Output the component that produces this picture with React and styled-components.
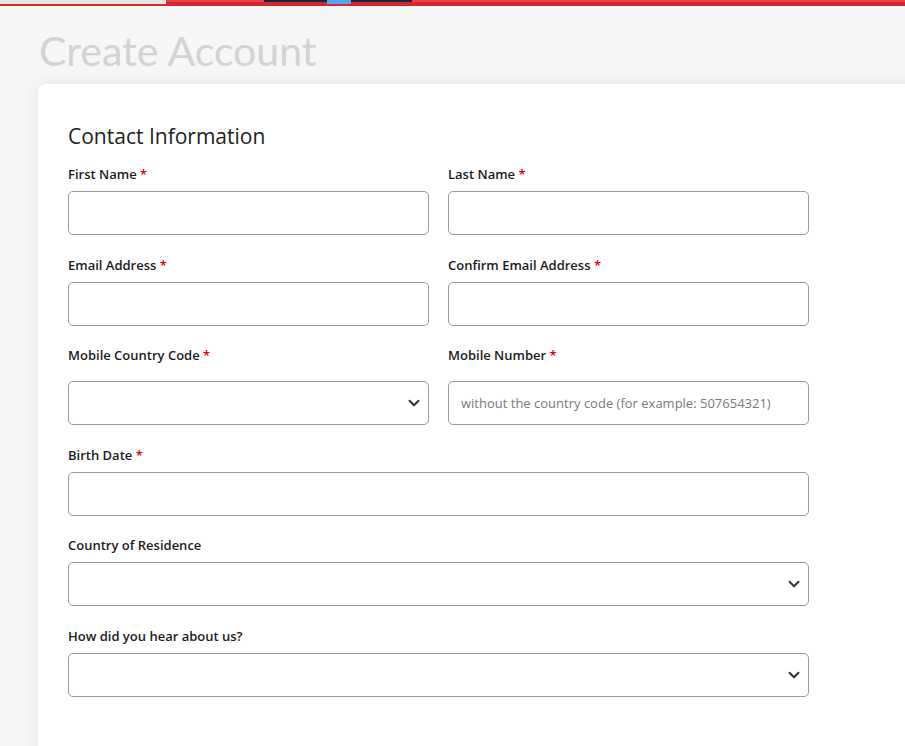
import React from 'react'
import styled, { createGlobalStyle } from 'styled-components'

const GlobalStyle = createGlobalStyle`
  html, body {
    margin: 0;
    padding: 0;
    background: #f6f6f6;
    overflow: hidden;
    font-family: "Open Sans", "Liberation Sans", sans-serif;
  }
`

const TopBar = styled.div`
  display: flex;
  height: 6px;
  width: 100%;
`
const BarGray = styled.div`
  width: 166px;
  height: 6px;
  background: linear-gradient(to bottom, #e5e5e5 0 4px, #d8262f 4px 6px);
`
const BarRed = styled.div`
  flex: 1;
  display: flex;
  height: 6px;
  background: linear-gradient(to bottom, #e8414a 0 2px, #d8262f 2px 6px);
`
const BarNav = styled.div`
  margin-left: 98px;
  width: 148px;
  height: 2px;
  background: #13253f;
  position: relative;
`
const BarActive = styled.div`
  position: absolute;
  left: 63px;
  top: 0;
  width: 24px;
  height: 4px;
  background: #57a6f5;
`

const Page = styled.div`
  padding-left: 38px;
`
const Title = styled.h1`
  margin: 23px 0 0 1px;
  height: 55px;
  font-family: Lato, "Open Sans", sans-serif;
  font-weight: 400;
  font-size: 41px;
  line-height: 44px;
  color: #d3d3d3;
`
const Card = styled.div`
  width: 900px;
  min-height: 700px;
  background: #fff;
  border-radius: 8px;
  box-shadow: 0 0 18px rgba(0, 0, 0, 0.07);
  padding: 38px 30px;
  box-sizing: border-box;
`
const SectionTitle = styled.h2`
  margin: 0 0 15px;
  font-size: 21px;
  font-weight: 400;
  line-height: 28px;
  color: #222;
`
const Grid = styled.div`
  width: 741px;
  display: grid;
  grid-template-columns: 1fr 1fr;
  column-gap: 19px;
  row-gap: 20.5px;
`
const Field = styled.div`
  grid-column: ${(p) => (p.$full ? '1 / 3' : 'auto')};
  display: flex;
  flex-direction: column;
`
const Label = styled.label`
  font-size: 13px;
  font-weight: 600;
  color: #1c1c1c;
  line-height: 18px;
  margin-bottom: ${(p) => (p.$gap ? p.$gap : 8)}px;
`
const Star = styled.span`
  color: #e00000;
`
const Input = styled.input`
  box-sizing: border-box;
  height: 44px;
  width: 100%;
  border: 1px solid #9a9a9a;
  border-radius: 5px;
  padding: 0 12px;
  font-family: "Open Sans", sans-serif;
  font-size: 13px;
  color: #333;
  background: #fff;
  outline: none;
  &::placeholder {
    color: #7a7a7a;
  }
`
const SelectBox = styled.div`
  box-sizing: border-box;
  height: 44px;
  border: 1px solid #9a9a9a;
  border-radius: 5px;
  background: #fff;
  display: flex;
  align-items: center;
  justify-content: flex-end;
  padding-right: 7px;
`

const Chevron = () => (
  <svg width="14" height="14" viewBox="0 0 14 14">
    <path d="M2.5 4.8 L7 9.2 L11.5 4.8" fill="none" stroke="#333" strokeWidth="2" strokeLinecap="round" strokeLinejoin="round" />
  </svg>
)

const FormField = ({ label, required, full, select, placeholder, gap }) => (
  <Field $full={full}>
    <Label $gap={gap}>
      {label} {required && <Star>*</Star>}
    </Label>
    {select ? (
      <SelectBox>
        <Chevron />
      </SelectBox>
    ) : (
      <Input placeholder={placeholder} />
    )}
  </Field>
)

export default function App() {
  return (
    <>
      <GlobalStyle />
      <TopBar>
        <BarGray />
        <BarRed>
          <BarNav>
            <BarActive />
          </BarNav>
        </BarRed>
      </TopBar>
      <Page>
        <Title>Create Account</Title>
        <Card>
          <SectionTitle>Contact Information</SectionTitle>
          <Grid>
            <FormField label="First Name" required />
            <FormField label="Last Name" required />
            <FormField label="Email Address" required />
            <FormField label="Confirm Email Address" required />
            <FormField label="Mobile Country Code" required select gap={17} />
            <FormField
              label="Mobile Number"
              required
              gap={17}
              placeholder="without the country code (for example: 507654321)"
            />
            <FormField label="Birth Date" required full />
            <FormField label="Country of Residence" full select />
            <FormField label="How did you hear about us?" full select />
          </Grid>
        </Card>
      </Page>
    </>
  )
}
